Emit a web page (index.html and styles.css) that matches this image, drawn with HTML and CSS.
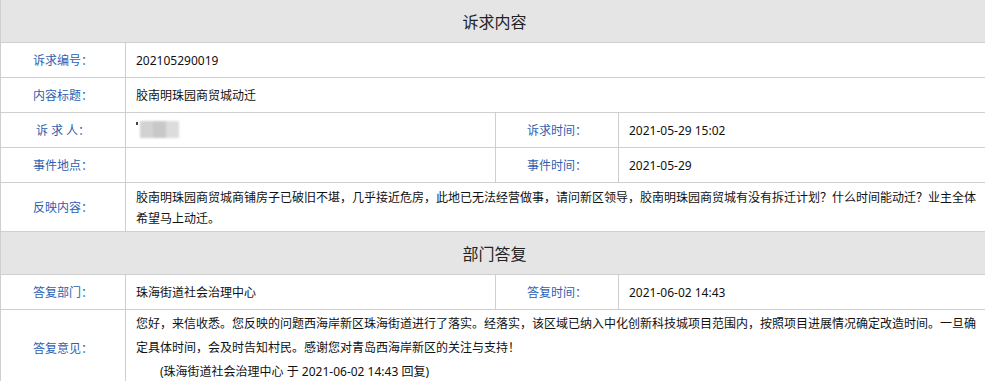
FILE: index.html
```html
<!DOCTYPE html>
<html lang="zh-CN">
<head>
<meta charset="utf-8">
<title>诉求内容</title>
<link rel="stylesheet" href="styles.css">
</head>
<body>
<table class="info">
  <colgroup>
    <col class="c1"><col class="c2"><col class="c3"><col class="c4">
  </colgroup>
  <tr class="sec first"><th colspan="4">诉求内容</th></tr>
  <tr class="row">
    <td class="lbl">诉求编号：</td>
    <td class="val" colspan="3">202105290019</td>
  </tr>
  <tr class="row">
    <td class="lbl">内容标题：</td>
    <td class="val" colspan="3">胶南明珠园商贸城动迁</td>
  </tr>
  <tr class="row">
    <td class="lbl">诉 求 人：</td>
    <td class="val"><span class="mask"><i class="dot"></i><span class="blur"><b class="m1"></b><b class="m2"></b><b class="m3"></b></span></span></td>
    <td class="lbl">诉求时间：</td>
    <td class="val">2021-05-29 15:02</td>
  </tr>
  <tr class="row">
    <td class="lbl">事件地点：</td>
    <td class="val"></td>
    <td class="lbl">事件时间：</td>
    <td class="val">2021-05-29</td>
  </tr>
  <tr class="content">
    <td class="lbl">反映内容：</td>
    <td class="val" colspan="3">胶南明珠园商贸城商铺房子已破旧不堪，几乎接近危房，此地已无法经营做事，请问新区领导，胶南明珠园商贸城有没有拆迁计划？什么时间能动迁？业主全体希望马上动迁。</td>
  </tr>
  <tr class="sec"><th colspan="4">部门答复</th></tr>
  <tr class="row">
    <td class="lbl">答复部门：</td>
    <td class="val">珠海街道社会治理中心</td>
    <td class="lbl">答复时间：</td>
    <td class="val">2021-06-02 14:43</td>
  </tr>
  <tr class="reply">
    <td class="lbl">答复意见：</td>
    <td class="val" colspan="3">您好，来信收悉。您反映的问题西海岸新区珠海街道进行了落实。经落实，该区域已纳入中化创新科技城项目范围内，按照项目进展情况确定改造时间。一旦确定具体时间，会及时告知村民。感谢您对青岛西海岸新区的关注与支持！<br><span class="sign">(珠海街道社会治理中心 于 2021-06-02 14:43 回复)</span></td>
  </tr>
</table>
</body>
</html>
```

FILE: styles.css
```css
html, body {
  margin: 0;
  padding: 0;
  background: #fff;
  overflow: hidden;
}
body {
  font-family: "Noto Sans", "Noto Sans CJK SC", sans-serif;
  font-size: 12px;
  color: #111;
}
.info {
  border-collapse: collapse;
  table-layout: fixed;
  width: 988px;
}
.c1 { width: 125px; }
.c2 { width: 370px; }
.c3 { width: 123px; }
.c4 { width: 370px; }
.info td, .info th {
  border: 1px solid #cfcfcf;
  padding: 0 10px;
}
.sec th {
  background: #e5e5e5;
  font-weight: normal;
  font-size: 16px;
  color: #222;
  text-align: center;
  height: 42px;
  padding: 0;
}
.sec.first th {
  border-top: none;
  height: 42px;
}
.row td {
  height: 34px;
  vertical-align: middle;
}
.lbl {
  text-align: center;
  color: #2d5fb2;
}
.val {
  text-align: left;
  color: #111;
}
.content .val {
  line-height: 21px;
  padding: 4px 10px 2px;
}
.reply .val {
  line-height: 24px;
  padding: 2px 10px 2px;
}
.sign {
  padding-left: 24px;
}
.mask {
  display: inline-flex;
  align-items: flex-start;
  vertical-align: middle;
  height: 20px;
}
.dot {
  display: block;
  width: 2px;
  height: 3px;
  background: #444;
  margin-top: 2px;
  margin-right: 2px;
}
.blur {
  display: flex;
  filter: blur(1.2px);
  margin-top: 1px;
}
.blur b {
  display: block;
  width: 13px;
  height: 17px;
}
.m1 { background: #d2d2d2; }
.m2 { background: #c8c8c8; }
.m3 { background: #dcdcdc; }
```
